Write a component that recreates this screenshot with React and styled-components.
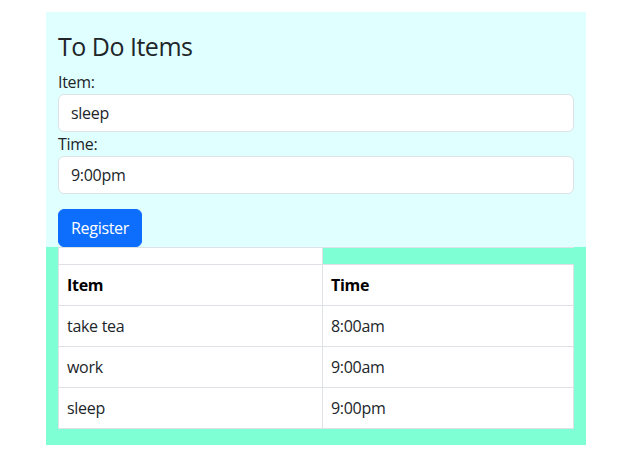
import React from "react";
import styled, { createGlobalStyle } from "styled-components";

const Global = createGlobalStyle`
  html, body { margin: 0; padding: 0; background: #fff; }
  body {
    font-family: "Open Sans", "Noto Sans", sans-serif;
    font-size: 16px;
    line-height: 24px;
    letter-spacing: -0.3px;
    color: #212529;
  }
  * { box-sizing: border-box; }
`;

const Page = styled.div`
  padding: 12px 47px 0 46px;
`;

const Container = styled.div`
  max-width: 540px;
`;

const FormSection = styled.section`
  background: #e0ffff;
  padding: 19px 12px 0;
  display: flex;
  flex-direction: column;
  align-items: flex-start;
`;

const Title = styled.h3`
  margin: 0 0 8px;
  font-size: 25px;
  line-height: 31px;
  font-weight: 500;
  letter-spacing: -0.5px;
`;

const Label = styled.label`
  display: block;
  line-height: 24px;
`;

const Input = styled.input`
  display: block;
  width: 100%;
  height: 38px;
  padding: 6px 12px;
  font: inherit;
  letter-spacing: inherit;
  color: #212529;
  background: #fff;
  border: 1px solid #dee2e6;
  border-radius: 6px;
  outline: none;
`;

const Button = styled.button`
  margin-top: 15px;
  height: 38px;
  padding: 6px 12px;
  font: inherit;
  letter-spacing: inherit;
  color: #fff;
  background: #0d6efd;
  border: 1px solid #0d6efd;
  border-radius: 6px;
`;

const TableSection = styled.section`
  background: #7fffd4;
  padding: 0 12px 16px;
`;

const Table = styled.table`
  width: 100%;
  border-collapse: collapse;
`;

const Cell = styled.td`
  padding: 8px;
  line-height: 24px;
  border: 1px solid #dee2e6;
  background: ${(p) => (p.$ghost ? "transparent" : "#fff")};
  border-right: ${(p) => (p.$ghost ? "none" : "1px solid #dee2e6")};
  font-weight: ${(p) => (p.$head ? 700 : 400)};
  color: ${(p) => (p.$head ? "#000" : "#212529")};
  text-align: left;
  width: ${(p) => p.$w || "auto"};
`;

const rows = [
  ["take tea", "8:00am"],
  ["work", "9:00am"],
  ["sleep", "9:00pm"],
];

export default function App() {
  return (
    <Page>
      <Global />
      <Container>
        <FormSection>
          <Title>To Do Items</Title>
          <Label htmlFor="item">Item:</Label>
          <Input id="item" defaultValue="sleep" />
          <Label htmlFor="time">Time:</Label>
          <Input id="time" defaultValue="9:00pm" />
          <Button>Register</Button>
        </FormSection>
        <TableSection>
          <Table>
            <tbody>
              <tr>
                <Cell $w="264px" />
                <Cell $ghost />
              </tr>
              <tr>
                <Cell as="th" $head>Item</Cell>
                <Cell as="th" $head>Time</Cell>
              </tr>
              {rows.map(([a, b]) => (
                <tr key={a}>
                  <Cell>{a}</Cell>
                  <Cell>{b}</Cell>
                </tr>
              ))}
            </tbody>
          </Table>
        </TableSection>
      </Container>
    </Page>
  );
}
